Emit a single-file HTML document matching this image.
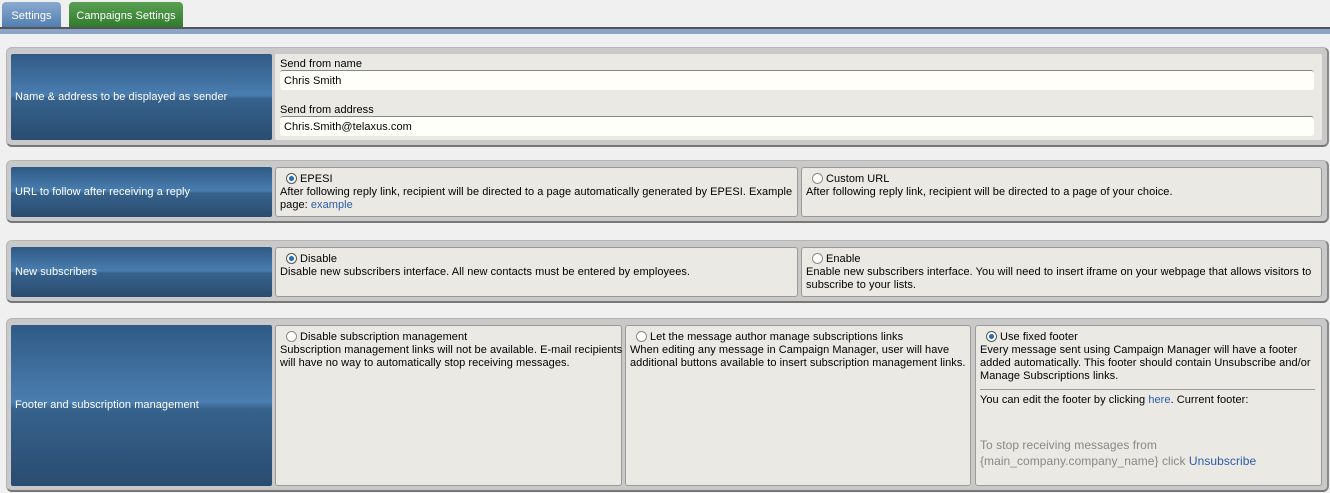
<!DOCTYPE html>
<html><head><style>
*{box-sizing:border-box;margin:0;padding:0}
body{width:1330px;height:493px;background:#f0f0f0;font-family:"Liberation Sans",Arial,sans-serif;font-size:11px;letter-spacing:0.05px;color:#000;position:relative;overflow:hidden}
.a{position:absolute}
.tab{position:absolute;top:2px;height:26px;border-radius:4px 4px 0 0;color:#fff;font-size:11px;line-height:28px;text-align:center}
.sec{position:absolute;left:6px;width:1323px;background:#c9c9c9;border-radius:6px;border:1px solid #b5b5b5;border-bottom:2px solid #777;border-right:2px solid #888}
.lab{position:absolute;left:11px;width:261px;background:linear-gradient(#2f5a85 0%,#4a7eb0 48%,#36628c 52%,#2a4c70 100%);color:#fff;line-height:1;display:flex;align-items:center;padding-left:4px;border-radius:2px}
.cell{position:absolute;background:#ebe9e4;border:1px solid #9a9a9a;border-radius:3px;padding:5px 1px 0 4px;line-height:13px;white-space:nowrap}
.r{display:inline-block;width:11px;height:11px;border-radius:50%;border:1px solid #8a8a8a;background:#fff;vertical-align:-2px;margin:0 3px 0 6px}
.r.on{background:radial-gradient(#2a6fb0 35%,#fff 45%);border-color:#555}
a{color:#2b5ba8;text-decoration:none}
.inp{position:absolute;left:280px;width:1034px;height:20px;background:#fffffa;border-top:1px solid #888;border-radius:3px;padding:4px 4px;line-height:12px}
</style></head><body>
<div class="tab" style="left:2px;width:59px;background:linear-gradient(#8aaad0,#4f7cb0)">Settings</div>
<div class="tab" style="left:69px;width:114px;background:linear-gradient(#5aa052,#2f7a2c)">Campaigns Settings</div>
<div class="a" style="left:0;top:27px;width:1330px;height:2px;background:#555"></div>
<div class="a" style="left:0;top:29px;width:1330px;height:5px;background:#8ba4c8"></div>

<div class="sec" style="top:47px;height:100px"></div>
<div class="lab" style="top:54px;height:86px">Name &amp; address to be displayed as sender</div>
<div class="a" style="left:275px;top:54px;width:1047px;height:86px;background:#ebe9e4;border-radius:2px"></div>
<div class="a" style="left:280px;top:58px">Send from name</div>
<div class="inp" style="top:70px">Chris Smith</div>
<div class="a" style="left:280px;top:104px">Send from address</div>
<div class="inp" style="top:116px">Chris.Smith@telaxus.com</div>

<div class="sec" style="top:160px;height:63px"></div>
<div class="lab" style="top:167px;height:50px">URL to follow after receiving a reply</div>
<div class="cell" style="left:275px;top:167px;width:523px;height:50px"><span class="r on" style="margin-left:6px"></span>EPESI<br>After following reply link, recipient will be directed to a page automatically generated by EPESI. Example<br>page: <a>example</a></div>
<div class="cell" style="left:801px;top:167px;width:521px;height:50px"><span class="r"></span>Custom URL<br>After following reply link, recipient will be directed to a page of your choice.</div>

<div class="sec" style="top:240px;height:63px"></div>
<div class="lab" style="top:247px;height:50px">New subscribers</div>
<div class="cell" style="left:275px;top:247px;width:523px;height:50px"><span class="r on"></span>Disable<br>Disable new subscribers interface. All new contacts must be entered by employees.</div>
<div class="cell" style="left:801px;top:247px;width:521px;height:50px"><span class="r"></span>Enable<br>Enable new subscribers interface. You will need to insert iframe on your webpage that allows visitors to<br>subscribe to your lists.</div>

<div class="sec" style="top:318px;height:174px"></div>
<div class="lab" style="top:325px;height:161px">Footer and subscription management</div>
<div class="cell" style="left:275px;top:325px;width:347px;height:161px"><span class="r"></span>Disable subscription management<br>Subscription management links will not be available. E-mail recipients<br>will have no way to automatically stop receiving messages.</div>
<div class="cell" style="left:625px;top:325px;width:346px;height:161px"><span class="r"></span>Let the message author manage subscriptions links<br>When editing any message in Campaign Manager, user will have<br>additional buttons available to insert subscription management links.</div>
<div class="cell" style="left:975px;top:325px;width:347px;height:161px"><span class="r on"></span>Use fixed footer<br>Every message sent using Campaign Manager will have a footer<br>added automatically. This footer should contain Unsubscribe and/or<br>Manage Subscriptions links.
<div style="border-top:1px solid #999;margin:6px 5px 4px 0"></div>You can edit the footer by clicking <a>here</a>. Current footer:
<div style="color:#888;font-size:12px;line-height:16px;margin-top:30px">To stop receiving messages from<br>{main_company.company_name} click <a>Unsubscribe</a></div></div>
</body></html>
